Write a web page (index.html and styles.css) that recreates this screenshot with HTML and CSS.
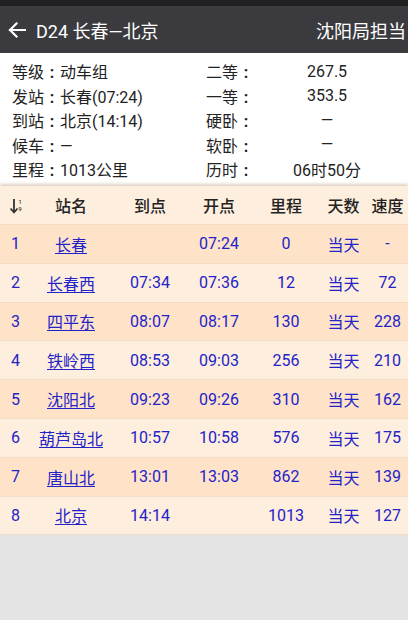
FILE: index.html
```html
<!DOCTYPE html>
<html lang="zh">
<head>
<meta charset="utf-8">
<link rel="stylesheet" href="styles.css">
</head>
<body>
<div class="status"></div>
<header class="bar">
  <svg class="back" width="18" height="16" viewBox="0 0 18 16"><path d="M17 8H2M8.5 1.5L2 8l6.5 6.5" fill="none" stroke="#fff" stroke-width="2.2" stroke-linecap="square"/></svg>
  <div class="title">D24 长春—北京</div>
  <div class="bureau">沈阳局担当</div>
</header>
<section class="info">
  <div class="irow"><div class="lcol">等级<span class="colon">:</span>动车组</div><div class="rlab">二等<span class="colon">:</span></div><div class="rval">267.5</div></div>
  <div class="irow"><div class="lcol">发站<span class="colon">:</span>长春(07:24)</div><div class="rlab">一等<span class="colon">:</span></div><div class="rval">353.5</div></div>
  <div class="irow"><div class="lcol">到站<span class="colon">:</span>北京(14:14)</div><div class="rlab">硬卧<span class="colon">:</span></div><div class="rval">—</div></div>
  <div class="irow"><div class="lcol">候车<span class="colon">:</span>—</div><div class="rlab">软卧<span class="colon">:</span></div><div class="rval">—</div></div>
  <div class="irow"><div class="lcol">里程<span class="colon">:</span>1013公里</div><div class="rlab">历时<span class="colon">:</span></div><div class="rval">06时50分</div></div>
</section>
<section class="table">
  <div class="trow thead">
    <div class="c"><svg width="14" height="18" viewBox="0 0 14 18"><path d="M5 2V15M1.5 11.5L5 15.5 8.5 11.5" fill="none" stroke="#333" stroke-width="1.8"/><text x="9.5" y="7" font-size="5.5" fill="#333" font-family="Roboto">1</text><text x="9.5" y="14" font-size="5.5" fill="#333" font-family="Roboto">9</text></svg></div>
    <div class="c">站名</div><div class="c">到点</div><div class="c">开点</div><div class="c">里程</div><div class="c">天数</div><div class="c">速度</div>
  </div>
  <div class="trow odd"><div class="c">1</div><div class="c"><u>长春</u></div><div class="c"></div><div class="c">07:24</div><div class="c">0</div><div class="c">当天</div><div class="c">-</div></div>
  <div class="trow"><div class="c">2</div><div class="c"><u>长春西</u></div><div class="c">07:34</div><div class="c">07:36</div><div class="c">12</div><div class="c">当天</div><div class="c">72</div></div>
  <div class="trow odd"><div class="c">3</div><div class="c"><u>四平东</u></div><div class="c">08:07</div><div class="c">08:17</div><div class="c">130</div><div class="c">当天</div><div class="c">228</div></div>
  <div class="trow"><div class="c">4</div><div class="c"><u>铁岭西</u></div><div class="c">08:53</div><div class="c">09:03</div><div class="c">256</div><div class="c">当天</div><div class="c">210</div></div>
  <div class="trow odd"><div class="c">5</div><div class="c"><u>沈阳北</u></div><div class="c">09:23</div><div class="c">09:26</div><div class="c">310</div><div class="c">当天</div><div class="c">162</div></div>
  <div class="trow"><div class="c">6</div><div class="c"><u>葫芦岛北</u></div><div class="c">10:57</div><div class="c">10:58</div><div class="c">576</div><div class="c">当天</div><div class="c">175</div></div>
  <div class="trow odd"><div class="c">7</div><div class="c"><u>唐山北</u></div><div class="c">13:01</div><div class="c">13:03</div><div class="c">862</div><div class="c">当天</div><div class="c">139</div></div>
  <div class="trow"><div class="c">8</div><div class="c"><u>北京</u></div><div class="c">14:14</div><div class="c"></div><div class="c">1013</div><div class="c">当天</div><div class="c">127</div></div>
</section>
</body>
</html>
```
FILE: styles.css
```css
html, body {
  margin: 0;
  padding: 0;
}
body {
  width: 408px;
  height: 620px;
  background: #e4e4e4;
  font-family: Roboto, "Noto Sans CJK SC", sans-serif;
  overflow: hidden;
}
.status {
  height: 6px;
  background: #202023;
}
.bar {
  height: 47px;
  background: #3b3b3f;
  display: flex;
  align-items: center;
  color: #fff;
  font-size: 18px;
  padding: 0 2px 0 8px;
}
.back {
  margin-right: 10px;
  margin-top: 1px;
}
.title {
  flex: 1;
  margin-top: 1px;
}
.bureau {
  margin-top: 1px;
}
.info {
  background: #fff;
  padding: 6px 0 3px 0;
  height: 124px;
  color: #222;
  font-size: 16px;
}
.irow {
  display: flex;
  height: 24.5px;
  align-items: center;
}
.colon {
  display: inline-block;
  width: 16px;
  text-align: center;
  font-weight: 700;
}
.lcol {
  width: 194px;
  padding-left: 12px;
}
.rlab {
  width: 60px;
}
.rval {
  width: 122px;
  text-align: center;
}
.table {
  background: #feeedd;
  box-shadow: 0 -2px 3px rgba(160, 120, 80, 0.35);
  position: relative;
}
.trow {
  display: grid;
  grid-template-columns: 30px 82px 76px 62px 72px 43px 43px;
  height: 38.8px;
  align-items: center;
  color: #2323c8;
  font-size: 16px;
  border-bottom: 1px solid #f3dcc6;
  box-sizing: border-box;
}
.trow.odd {
  background: #fee3c9;
}
.thead {
  color: #222;
  font-weight: 500;
  height: 39px;
}
.c {
  text-align: center;
  white-space: nowrap;
}
.c svg {
  display: block;
  margin: 2px auto 0 9px;
}
.trow .c:first-child {
  text-align: left;
  padding-left: 11px;
}
.thead .c:first-child {
  padding-left: 0;
}
.trow .c:last-child {
  padding-left: 2px;
}
u {
  text-decoration-thickness: 1px;
  text-underline-offset: 2px;
}
```
